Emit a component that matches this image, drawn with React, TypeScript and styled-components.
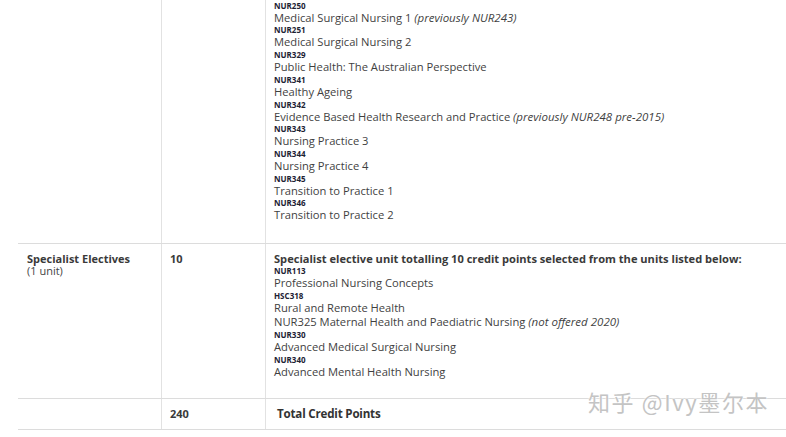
import React from "react";
import styled, { createGlobalStyle } from "styled-components";

const GlobalStyle = createGlobalStyle`
  html, body {
    margin: 0;
    padding: 0;
    background: #fff;
    overflow: hidden;
  }
  body {
    font-family: "Open Sans", "Liberation Sans", sans-serif;
    color: #3a3a3a;
  }
`;

const Page = styled.div`
  position: relative;
  width: 786px;
  height: 437px;
  overflow: hidden;
`;

const Table = styled.div<{ $offset: number }>`
  margin-top: ${(p) => p.$offset}px;
  margin-left: 18px;
  width: 790px;
`;

const Row = styled.div`
  display: grid;
  grid-template-columns: 143px 104px 1fr;
  border-bottom: 1px solid #dcdcdc;
`;

const Cell = styled.div<{ $divider?: boolean; $pt: number; $pb: number }>`
  padding: ${(p) => p.$pt}px 9px ${(p) => p.$pb}px ${(p) => (p.$divider ? 8 : 9)}px;
  border-left: ${(p) => (p.$divider ? "1px solid #e2e2e2" : "none")};
`;

const GroupTitle = styled.div`
  font-size: 11px;
  font-weight: 700;
  line-height: 13px;
  color: #3a3a3a;
`;

const GroupNote = styled.div`
  font-size: 11px;
  line-height: 12px;
  color: #444;
`;

const Credits = styled.div`
  font-size: 11px;
  font-weight: 700;
  line-height: 14px;
  color: #3a3a3a;
`;

const Lead = styled.div`
  font-size: 11.1px;
  font-weight: 700;
  line-height: 14px;
  color: #3a3a3a;
  white-space: nowrap;
`;

const Code = styled.div`
  font-size: 8px;
  font-weight: 700;
  line-height: 10px;
  color: #1c2233;
`;

const Title = styled.div`
  font-size: 11.2px;
  line-height: 14.7px;
  color: #3f3f3f;
  white-space: nowrap;
`;

const Note = styled.em`
  font-style: italic;
  font-size: 11.5px;
`;

const TotalText = styled.div`
  font-size: 11.6px;
  font-weight: 700;
  letter-spacing: -0.2px;
  line-height: 14px;
  color: #333;
  padding-left: 3px;
`;

const Watermark = styled.div`
  position: absolute;
  left: 588px;
  top: 388px;
  font-family: "Noto Sans CJK SC", "Liberation Sans", sans-serif;
  font-size: 22px;
  line-height: 26px;
  color: #c4c4c4;
  letter-spacing: 1.6px;
  text-shadow: 0 0 2px #fff, 0 0 2px #fff;
  white-space: nowrap;
`;

type Unit = { code?: string; title: string; note?: string };

const coreUnits: Unit[] = [
  { code: "NUR249", title: "Nursing Practice 2" },
  { code: "NUR250", title: "Medical Surgical Nursing 1", note: "(previously NUR243)" },
  { code: "NUR251", title: "Medical Surgical Nursing 2" },
  { code: "NUR329", title: "Public Health: The Australian Perspective" },
  { code: "NUR341", title: "Healthy Ageing" },
  {
    code: "NUR342",
    title: "Evidence Based Health Research and Practice",
    note: "(previously NUR248 pre-2015)",
  },
  { code: "NUR343", title: "Nursing Practice 3" },
  { code: "NUR344", title: "Nursing Practice 4" },
  { code: "NUR345", title: "Transition to Practice 1" },
  { code: "NUR346", title: "Transition to Practice 2" },
];

const electiveUnits: Unit[] = [
  { code: "NUR113", title: "Professional Nursing Concepts" },
  { code: "HSC318", title: "Rural and Remote Health" },
  { title: "NUR325 Maternal Health and Paediatric Nursing", note: "(not offered 2020)" },
  { code: "NUR330", title: "Advanced Medical Surgical Nursing" },
  { code: "NUR340", title: "Advanced Mental Health Nursing" },
];

const UnitList = ({ units }: { units: Unit[] }) => (
  <>
    {units.map((u) => (
      <React.Fragment key={u.title}>
        {u.code && <Code>{u.code}</Code>}
        <Title>
          {u.title}
          {u.note && (
            <>
              {" "}
              <Note>{u.note}</Note>
            </>
          )}
        </Title>
      </React.Fragment>
    ))}
  </>
);

export default function App() {
  return (
    <Page>
      <GlobalStyle />
      <Table $offset={-24}>
        <Row>
          <Cell $pt={0} $pb={20} />
          <Cell $divider $pt={0} $pb={20} />
          <Cell $divider $pt={0} $pb={20}>
            <UnitList units={coreUnits} />
          </Cell>
        </Row>
        <Row>
          <Cell $pt={8} $pb={18}>
            <GroupTitle>Specialist Electives</GroupTitle>
            <GroupNote>(1 unit)</GroupNote>
          </Cell>
          <Cell $divider $pt={8} $pb={18}>
            <Credits>10</Credits>
          </Cell>
          <Cell $divider $pt={8} $pb={18}>
            <Lead>
              Specialist elective unit totalling 10 credit points selected from the units listed
              below:
            </Lead>
            <UnitList units={electiveUnits} />
          </Cell>
        </Row>
        <Row>
          <Cell $pt={8} $pb={8} />
          <Cell $divider $pt={8} $pb={8}>
            <Credits>240</Credits>
          </Cell>
          <Cell $divider $pt={8} $pb={8}>
            <TotalText>Total Credit Points</TotalText>
          </Cell>
        </Row>
      </Table>
      <Watermark>知乎 @Ivy墨尔本</Watermark>
    </Page>
  );
}
